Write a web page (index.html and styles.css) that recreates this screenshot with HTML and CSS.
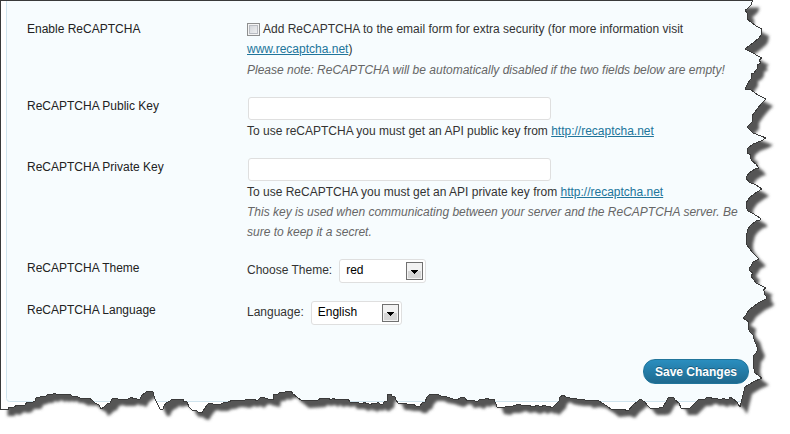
FILE: index.html
```html
<!DOCTYPE html>
<html lang="en">
<head>
<meta charset="utf-8">
<title>ReCAPTCHA Settings</title>
<link rel="stylesheet" href="styles.css">
</head>
<body>
<main class="page">
  <svg class="paper" viewBox="0 0 790 434" preserveAspectRatio="none" aria-hidden="true">
    <defs>
      <path id="torn" d="M0.5 0.5H752.5L751 5L747 9L745 10L747 13V19L751 22L756 26L762 29L761 35L759 38L753 43L745 49L753 53L758 56L762 58L759 60L761 63L757 65V69L754 73L751 74V79L748 83L745 89L751 90L758 95L766 99L762 103L757 109L752 116V122L747 127L753 133L766 138L761 141L753 144L748 148L747 153L751 155L750 157L752 161L756 164L759 168L755 169L749 173L746 178L749 182L756 185L762 189L757 192L750 197L746 203V207L748 211L752 213L757 216L760 218V220L756 221L751 225L748 229L746 237V242L747 245L752 252L759 259L753 262L751 266L749 268L750 271L753 273L751 276L756 283L766 288L763 290L765 292L764 294L767 297L766 299L758 303L749 310L746 315L743 318L749 322L748 328L750 332L753 335L755 342L758 349L756 353L754 355L753 365L755 373L762 378L753 382L745 387L743 395L740 407L738 404L737 402L733 399L730 397L729 399H725L723 398L721 400L718 399L715 398L713 399L710 397H707L705 399H699L696 402L693 405L690 408H681L679 403L675 400L674 398L671 397L668 398L666 402L663 407L659 408H650L647 405L645 402L640 399L637 402L633 405L628 411L623 409L612 410L607 406L602 403L599 401L593 400L586 401L584 399L577 399L570 398L566 397L563 395L560 397L559 401L555 405L552 408L549 406L547 407L545 405L540 407L538 405L533 407L528 405L523 406L519 404L513 406H506L504 408L497 407L494 399L490 400L487 398L483 400L480 399L477 402L473 400L467 401L465 398L462 397L457 400L453 399L447 397L441 396L437 394H430L427 397L425 402L422 403L420 406H416L413 404H407L402 403L398 403L396 400L395 397L392 396L391 394L388 394L387 401L384 402L383 404L380 404L378 402L376 404L373 403L370 405L368 403L366 404L365 402L362 404L359 403L358 402L350 402L348 399L344 400L340 399L336 400L333 398L331 400L328 398L324 399L321 398L318 400L302 401L297 397L293 394L291 391H286L284 393L280 392L278 394H274L273 400L268 399L262 397L260 398L257 401L254 399L250 400L247 399L243 401L237 400L233 400L228 402L225 402L221 404H213L211 403L208 404L205 408L202 413L198 412L196 410H192L189 407L187 402L183 401V399H178L176 400L172 399L170 401L166 403L164 406L163 409H160L157 403L155 399L153 392L151 391H147L145 393L142 395L140 399L138 400L136 398L133 399L132 397L128 399H118L116 398L112 399L110 403L107 404L104 407L101 409L99 405L95 403L92 400L89 398L87 399L84 398L82 399L78 397L76 396L72 396L70 394L67 395L65 394L62 395L60 394L57 395L55 393L51 395L48 394L46 396L42 396L40 397L36 398L35 401L33 402H27L25 405L21 406L17 405L13 408L8 407V409H0.5Z"/>
      <clipPath id="sheet"><use href="#torn"/></clipPath>
      <filter id="soft" x="-5%" y="-5%" width="110%" height="110%"><feGaussianBlur stdDeviation="1.5"/></filter>
    </defs>
    <use class="shadow" href="#torn" transform="translate(7 7)" filter="url(#soft)"/>
    <use class="sheet" href="#torn"/>
    <g clip-path="url(#sheet)"><rect class="panel" x="6.500" y="-8.500" width="800" height="410" rx="3"/></g>
    <use class="outline" href="#torn"/>
  </svg>

  <form class="settings">
    <div class="row">
      <div class="name">Enable ReCAPTCHA</div>
      <div class="field">
        <p class="intro"><input class="check" type="checkbox" id="enable"><label for="enable">Add ReCAPTCHA to the email form for extra security (for more information visit</label> <a href="#">www.recaptcha.net</a>)</p>
        <p class="note">Please note: ReCAPTCHA will be automatically disabled if the two fields below are empty!</p>
      </div>
    </div>
    <div class="row">
      <label class="name" for="public">ReCAPTCHA Public Key</label>
      <div class="field">
        <input class="text" type="text" id="public">
        <p>To use reCAPTCHA you must get an API public key from <a href="#">http://recaptcha.net</a></p>
      </div>
    </div>
    <div class="row">
      <label class="name" for="private">ReCAPTCHA Private Key</label>
      <div class="field">
        <input class="text" type="text" id="private">
        <p>To use ReCAPTCHA you must get an API private key from <a href="#">http://recaptcha.net</a></p>
        <p class="note">This key is used when communicating between your server and the ReCAPTCHA server. Be sure to keep it a secret.</p>
      </div>
    </div>
    <div class="row">
      <div class="name">ReCAPTCHA Theme</div>
      <div class="field choice">
        <label for="theme">Choose Theme:</label>
        <span class="drop">
          <select id="theme"><option>red</option></select>
          <svg class="arrow" width="17" height="18" viewBox="0 0 17 18" aria-hidden="true"><rect class="arrow-edge" x=".5" y=".5" width="16" height="17"/><path class="arrow-low" d="M2 9h13v7H2z"/><path class="arrow-tip" d="M5 8h7v1h-1v1h-1v1H9v1H8v-1H7v-1H6V9H5z"/></svg>
        </span>
      </div>
    </div>
    <div class="row">
      <div class="name">ReCAPTCHA Language</div>
      <div class="field choice">
        <label for="language">Language:</label>
        <span class="drop">
          <select id="language" class="wide"><option>English</option></select>
          <svg class="arrow" width="17" height="18" viewBox="0 0 17 18" aria-hidden="true"><rect class="arrow-edge" x=".5" y=".5" width="16" height="17"/><path class="arrow-low" d="M2 9h13v7H2z"/><path class="arrow-tip" d="M5 8h7v1h-1v1h-1v1H9v1H8v-1H7v-1H6V9H5z"/></svg>
        </span>
      </div>
    </div>
    <div class="actions"><button class="save" type="submit">Save Changes</button></div>
  </form>
</main>
</body>
</html>
```
FILE: styles.css
```css
* { box-sizing: border-box; }
body {
  margin: 0;
  background: #fff;
  color: #333;
  font: 12px/20px "Liberation Sans", Arial, sans-serif;
}
p { margin: 0; }
a { color: #21759b; }

.page { position: relative; min-height: 100vh; }
.paper { position: absolute; top: 0; left: 0; width: 100%; height: 100%; }
.shadow { fill: #555; }
.sheet { fill: #fff; }
.panel { fill: #f7fcfe; stroke: #d0e4ee; }
.outline { fill: none; stroke: #3a3a3a; shape-rendering: crispEdges; }

.settings {
  position: relative;
  display: flex;
  flex-direction: column;
  gap: 16px;
  padding: 19px 37px 50px 27px;
}
.row { display: grid; grid-template-columns: 220px 1fr; }
.name { color: #222; }
.intro { padding-bottom: 1px; }
.note { color: #666; font-style: italic; }

.check {
  appearance: none;
  width: 13px;
  height: 13px;
  margin: 0 3px 0 0;
  vertical-align: -3px;
  border: 1px solid #8e8f8f;
  background: linear-gradient(135deg, #cbcfd5, #f6f6f6);
  box-shadow: inset 0 0 0 1px #f4f4f4, inset 0 0 0 2px #b9bcc2;
}
.text {
  display: block;
  width: 303px;
  height: 23px;
  margin: 1px;
  border: 1px solid #dfdfdf;
  border-radius: 3px;
  background: #fff;
  font: inherit;
}
.choice { display: flex; align-items: flex-start; gap: 7px; height: 26px; }
.choice label { padding-top: 2px; }
.drop { position: relative; padding-top: 1px; }
select {
  appearance: none;
  display: block;
  width: 87px;
  height: 24px;
  padding: 0 24px 2px 6px;
  border: 1px solid #dfdfdf;
  border-radius: 3px;
  background: #fff;
  color: #000;
  font: inherit;
}
.wide { width: 91px; }
.arrow { position: absolute; top: 4px; right: 3px; pointer-events: none; }
.arrow-edge { fill: #f2f2f2; stroke: #707070; }
.arrow-low { fill: #d6d6d6; }
.arrow-tip { fill: #000; }

.actions { display: flex; justify-content: flex-end; padding: 17px 4px 0 0; }
.save {
  height: 25px;
  padding: 0 11px;
  border: 1px solid #21759b;
  border-radius: 12px;
  background: linear-gradient(#2a8ebf, #1f6a8f);
  color: #fff;
  font: bold 12px/20px "Liberation Sans", Arial, sans-serif;
  text-shadow: 0 -1px 0 rgba(0, 0, 0, .3);
}
```
